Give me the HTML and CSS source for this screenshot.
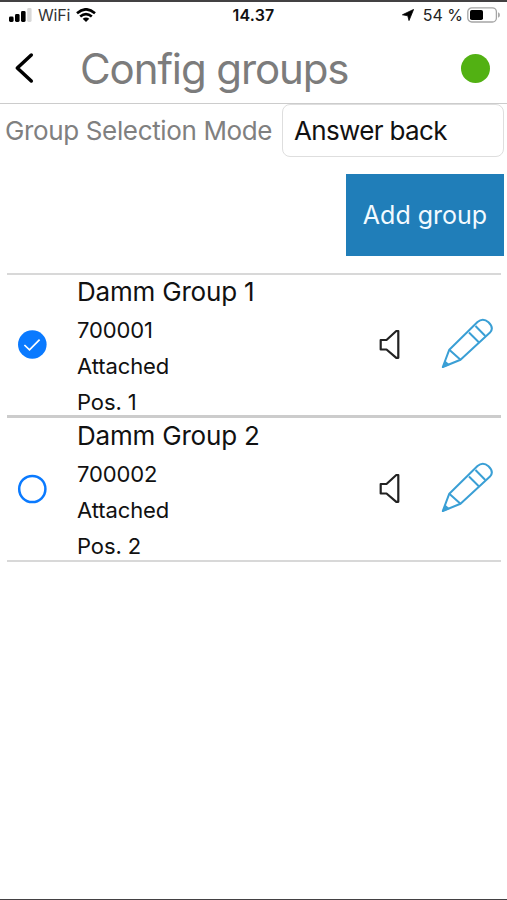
FILE: index.html
```html
<!DOCTYPE html>
<html lang="en">
<head>
<meta charset="utf-8">
<meta name="viewport" content="width=device-width, initial-scale=1">
<title>Config groups</title>
<link rel="stylesheet" href="styles.css">
</head>
<body>
<div class="screen">
  <div class="status">
    <div class="status-side">
      <svg class="signal" width="23" height="14" viewBox="0 0 23 14"><rect x="0" y="8.6" width="4.6" height="5.4" rx="1.4"/><rect x="6" y="6" width="4.6" height="8" rx="1.4"/><rect x="12" y="3" width="4.6" height="11" rx="1.4"/><rect x="18.2" y="0" width="4.4" height="14" rx="1.4" fill="#d8d8d8"/></svg>
      <span class="carrier">WiFi</span>
      <svg width="20" height="14" viewBox="0 0 20 14"><g fill="none" stroke="#000" stroke-width="2.6"><path d="M1 5.2Q10-2.6 19 5.2"/><path d="M4.2 8.6Q10 3.6 15.8 8.6"/></g><path d="M6.7 10.7Q10 8.2 13.3 10.7L10 14Z"/></svg>
    </div>
    <span class="clock">14.37</span>
    <div class="status-side status-right">
      <svg width="12" height="12" viewBox="0 0 12 12"><path d="M11.6.4 7 11.6 5.8 6.8.4 5.8Z" stroke="#000" stroke-width=".8"/></svg>
      <span class="percent">54 %</span>
      <svg class="battery" width="33" height="16" viewBox="0 0 33 16"><rect x=".8" y=".8" width="28.6" height="14.2" rx="4" fill="#fff" stroke="#a5a5a5" stroke-width="1.3"/><rect x="3" y="3" width="13" height="10" rx="1.8"/><path d="M31 5.2Q33 6 33 8T31 10.8Z" fill="#aaa"/></svg>
    </div>
  </div>
  <header class="header">
    <svg class="back" width="20" height="32" viewBox="0 0 20 32"><path d="M17.3 3 3.3 16 17.3 29" fill="none" stroke="#000" stroke-width="3.5" stroke-linecap="round" stroke-linejoin="round"/></svg>
    <h1 class="title">Config groups</h1>
    <span class="online"></span>
  </header>
  <div class="mode">
    <span class="mode-label">Group Selection Mode</span>
    <div class="mode-value"><span>Answer back</span></div>
  </div>
  <div class="actions"><button class="add"><span>Add group</span></button></div>
  <main class="list">
    <section class="row">
      <svg class="check" width="30" height="30" viewBox="0 0 30 30"><circle cx="15.3" cy="14.5" r="14.3" fill="#0a7aff"/><path d="M7.4 15 12.5 19.8 22.6 9.6" fill="none" stroke="#fff" stroke-width="1.7"/></svg>
      <div class="info"><h2 class="name">Damm Group 1</h2><p class="number">700001</p><p class="state">Attached</p><p class="pos">Pos. 1</p></div>
      <svg class="speaker" width="22" height="32" viewBox="0 0 22 32"><path d="M1.7 11H7.5L17.3 2H19.3V28.8H17.3L7.5 20.5H1.7Z" fill="none" stroke="#222" stroke-width="2.2" stroke-linejoin="round"/></svg>
      <svg class="pencil" width="52" height="52" viewBox="0 0 52 52"><g fill="none" stroke="#3a9fd5" stroke-width="2" stroke-linejoin="round"><path d="M1.8 49 8.3 31.7 36.5 4Q42-.8 47.5 4.3 53.3 10 49 14.5L19.5 41.8Z"/><path d="M8.3 31.7 19.5 41.8M28 14.5 37.8 24.2M34.5 8 44.3 18"/></g><path d="M1 50 4 42.5 9 46.8Z" fill="#3a9fd5"/></svg>
    </section>
    <section class="row">
      <svg class="check" width="30" height="30" viewBox="0 0 30 30"><circle cx="15.3" cy="15" r="13.1" fill="#fff" stroke="#0a7aff" stroke-width="2.5"/></svg>
      <div class="info"><h2 class="name">Damm Group 2</h2><p class="number">700002</p><p class="state">Attached</p><p class="pos">Pos. 2</p></div>
      <svg class="speaker" width="22" height="32" viewBox="0 0 22 32"><path d="M1.7 11H7.5L17.3 2H19.3V28.8H17.3L7.5 20.5H1.7Z" fill="none" stroke="#222" stroke-width="2.2" stroke-linejoin="round"/></svg>
      <svg class="pencil" width="52" height="52" viewBox="0 0 52 52"><g fill="none" stroke="#3a9fd5" stroke-width="2" stroke-linejoin="round"><path d="M1.8 49 8.3 31.7 36.5 4Q42-.8 47.5 4.3 53.3 10 49 14.5L19.5 41.8Z"/><path d="M8.3 31.7 19.5 41.8M28 14.5 37.8 24.2M34.5 8 44.3 18"/></g><path d="M1 50 4 42.5 9 46.8Z" fill="#3a9fd5"/></svg>
    </section>
  </main>
</div>
</body>
</html>
```

FILE: styles.css
```css
* { box-sizing: border-box; }
body { margin: 0; background: #fff; font-family: Inter, "Liberation Sans", sans-serif; color: #111; }
h1, h2, p { margin: 0; font-weight: 400; white-space: nowrap; }
svg { display: block; flex: none; }
.screen { height: 900px; overflow: hidden; border-top: 2px solid #434143; border-bottom: 1px solid #434143; }
.status { height: 26px; display: grid; grid-template-columns: 1fr auto 1fr; align-items: center; padding: 0 8px 0 9px; font-size: 16px; line-height: 20px; }
.status-side { display: flex; align-items: center; white-space: nowrap; }
.status-right { justify-content: flex-end; }
.carrier { margin: 0 6px 0 6px; color: #333; letter-spacing: -.2px; }
.clock { font-weight: 600; letter-spacing: .2px; margin-left: -1px; }
.percent { margin: 0 4px 0 9px; color: #222; }
.battery { margin: -1px -1px 0 0; }
.header { height: 76px; display: flex; align-items: center; border-bottom: 1px solid #ccc; padding: 0 17px 0 14px; }
.back { margin-top: 5px; }
.title { margin: 6px 0 0 46px; font-size: 42px; line-height: 50px; letter-spacing: -1.1px; color: #7c7c7c; }
.online { width: 29px; height: 29px; margin: 5px 0 0 auto; border-radius: 50%; background: #52b113; }
.mode { height: 53px; display: flex; align-items: center; padding-left: 5px; font-size: 26px; }
.mode-label { width: 277px; color: #808080; letter-spacing: -.36px; white-space: nowrap; }
.mode-value { width: 222px; height: 53px; display: flex; align-items: center; padding-left: 11px; border: 1px solid #dedede; border-radius: 8px; letter-spacing: -.65px; white-space: nowrap; }
.actions { display: flex; justify-content: flex-end; padding: 17px 3px 17px 0; }
.add { width: 158px; height: 82px; padding: 0; border: 0; background: #207eb9; color: #f2faff; font: 25px/30px Inter, sans-serif; white-space: nowrap; }
.list { margin: 0 6px 0 7px; border-top: 2px solid #d8d8d8; }
.row { height: 143px; display: flex; align-items: center; border-bottom: 3px solid #ccc; padding: 0 7px 0 10px; }
.row:last-child { height: 144px; border-bottom: 2px solid #d8d8d8; }
.info { margin-left: 30px; width: 302px; }
.name { font-size: 26px; line-height: 41px; padding-top: 1px; letter-spacing: -.2px; }
.number, .state, .pos { font-size: 22px; line-height: 36.3px; letter-spacing: -.1px; }
.pencil { margin: -3px 0 0 40px; }
```
